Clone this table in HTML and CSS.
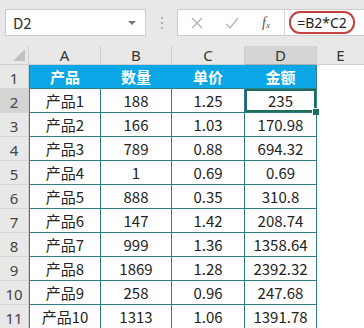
FILE: index.html
```html
<!DOCTYPE html>
<html>
<head>
<meta charset="utf-8">
<link rel="stylesheet" href="styles.css">
</head>
<body>
<div class="app">
  <div class="toolbar">
    <div class="namebox"><span class="ref">D2</span><span class="caret"></span></div>
    <div class="grip"><i></i><i></i><i></i></div>
    <div class="fbar">
      <div class="ficons">
        <svg class="ic" width="14" height="14" viewBox="0 0 14 14"><path d="M2 2L12 12M12 2L2 12" stroke="#b4b4b4" stroke-width="1.4" fill="none"/></svg>
        <svg class="ic" width="16" height="14" viewBox="0 0 16 14"><path d="M2 8L6 12L14 2" stroke="#b4b4b4" stroke-width="1.4" fill="none"/></svg>
        <span class="fx">f<sub>x</sub></span>
      </div>
      <div class="finput"><span class="oval">=B2*C2</span></div>
    </div>
  </div>
  <div class="sheet">
    <div class="corner"><span class="tri"></span></div>
    <div class="ch">A</div><div class="ch">B</div><div class="ch">C</div><div class="ch sel">D</div><div class="ch last">E</div>

    <div class="rh">1</div>
    <div class="c hd first">产品</div><div class="c hd">数量</div><div class="c hd">单价</div><div class="c hd hdlast">金额</div><div class="e"></div>

    <div class="rh sel">2</div>
    <div class="c first">产品1</div><div class="c">188</div><div class="c">1.25</div><div class="c active">235<span class="handle"></span></div><div class="e"></div>

    <div class="rh">3</div>
    <div class="c first">产品2</div><div class="c">166</div><div class="c">1.03</div><div class="c">170.98</div><div class="e"></div>

    <div class="rh">4</div>
    <div class="c first">产品3</div><div class="c">789</div><div class="c">0.88</div><div class="c">694.32</div><div class="e"></div>

    <div class="rh">5</div>
    <div class="c first">产品4</div><div class="c">1</div><div class="c">0.69</div><div class="c">0.69</div><div class="e"></div>

    <div class="rh">6</div>
    <div class="c first">产品5</div><div class="c">888</div><div class="c">0.35</div><div class="c">310.8</div><div class="e"></div>

    <div class="rh">7</div>
    <div class="c first">产品6</div><div class="c">147</div><div class="c">1.42</div><div class="c">208.74</div><div class="e"></div>

    <div class="rh">8</div>
    <div class="c first">产品7</div><div class="c">999</div><div class="c">1.36</div><div class="c">1358.64</div><div class="e"></div>

    <div class="rh">9</div>
    <div class="c first">产品8</div><div class="c">1869</div><div class="c">1.28</div><div class="c">2392.32</div><div class="e"></div>

    <div class="rh">10</div>
    <div class="c first">产品9</div><div class="c">258</div><div class="c">0.96</div><div class="c">247.68</div><div class="e"></div>

    <div class="rh">11</div>
    <div class="c first">产品10</div><div class="c">1313</div><div class="c">1.06</div><div class="c">1391.78</div><div class="e"></div>
  </div>
</div>
</body>
</html>
```

FILE: styles.css
```css
html, body {
  margin: 0;
  padding: 0;
}
body {
  width: 364px;
  height: 328px;
  overflow: hidden;
  background: #ffffff;
  font-family: "Noto Sans CJK SC", "Noto Sans", sans-serif;
  color: #222;
}
.app {
  width: 364px;
  height: 328px;
  overflow: hidden;
}
.toolbar {
  height: 46px;
  background: #e8e8e8;
  display: flex;
  align-items: flex-start;
  padding: 9px 0 0 5px;
  box-sizing: border-box;
}
.namebox {
  width: 141px;
  height: 27px;
  box-sizing: border-box;
  background: #fff;
  border: 1px solid #cdcdcd;
  display: flex;
  align-items: center;
  justify-content: space-between;
  padding: 0 7px 0 7px;
}
.ref {
  font-size: 15px;
  color: #333;
  line-height: 1;
}
.caret {
  width: 0;
  height: 0;
  border-left: 4px solid transparent;
  border-right: 4px solid transparent;
  border-top: 4px solid #777;
  margin-right: 2px;
}
.grip {
  width: 31px;
  height: 27px;
  display: flex;
  flex-direction: column;
  align-items: center;
  justify-content: center;
  gap: 3px;
}
.grip i {
  width: 2px;
  height: 2px;
  background: #b0b0b0;
}
.fbar {
  flex: 1;
  height: 27px;
  display: flex;
  background: #fff;
  border: 1px solid #cdcdcd;
  border-right: none;
  box-sizing: border-box;
}
.ficons {
  width: 107px;
  display: flex;
  align-items: center;
  padding-left: 12px;
  gap: 20px;
  box-sizing: border-box;
  border-right: 1px solid #d6d6d6;
}
.fx {
  font-family: "Liberation Serif", serif;
  font-style: italic;
  font-size: 14px;
  color: #555;
  margin-left: 2px;
}
.fx sub {
  font-size: 9px;
  vertical-align: -1px;
}
.finput {
  flex: 1;
  display: flex;
  align-items: center;
  padding-left: 4px;
}
.oval {
  display: inline-block;
  border: 2px solid #c6403d;
  border-radius: 11px;
  height: 23px;
  line-height: 20px;
  box-sizing: border-box;
  width: 66px;
  text-align: center;
  font-size: 14px;
  color: #222;
  font-family: "Noto Sans", sans-serif;
}
.sheet {
  display: grid;
  grid-template-columns: 29px 72px 71px 73px 72px 47px;
  grid-template-rows: 19px repeat(11, 24px);
  background: #fff;
}
.corner {
  background: #e8e8e8;
  border-right: 1px solid #cfcfcf;
  border-bottom: 1px solid #cfcfcf;
  box-sizing: border-box;
  position: relative;
}
.tri {
  position: absolute;
  right: 3px;
  bottom: 3px;
  width: 0;
  height: 0;
  border-left: 12px solid transparent;
  border-bottom: 12px solid #c2c2c2;
}
.ch {
  background: #e8e8e8;
  border-right: 1px solid #cfcfcf;
  border-bottom: 1px solid #cfcfcf;
  box-sizing: border-box;
  text-align: center;
  font-size: 15px;
  line-height: 19px;
  color: #333;
  font-family: "Noto Sans", sans-serif;
}
.ch.sel {
  background: #d4d4d4;
  border-bottom: 1px solid #adadad;
}
.ch.last {
  border-right: none;
}
.rh {
  background: #e8e8e8;
  border-bottom: 1px solid #d6d6d6;
  border-right: 1px solid #cfcfcf;
  box-sizing: border-box;
  text-align: center;
  font-size: 15px;
  line-height: 26px;
  color: #444;
  font-family: "Noto Sans", sans-serif;
}
.rh.sel {
  background: #d4d4d4;
}
.c {
  border-right: 1px solid #2f7f88;
  border-bottom: 1px solid #2f7f88;
  box-sizing: border-box;
  text-align: center;
  font-size: 15px;
  line-height: 23px;
  color: #222;
  position: relative;
}
.c.first {
  border-left: 1px solid #2f7f88;
}
.hd {
  background: #0aa6e5;
  color: #fff;
  font-weight: bold;
  border-right-color: #0aa6e5;
}
.hd.hdlast {
  border-right-color: #2f7f88;
}
.c.active {
  box-shadow: inset 0 0 0 2px #1e6e5e;
}
.handle {
  position: absolute;
  right: -4px;
  bottom: -4px;
  width: 6px;
  height: 6px;
  background: #1e6e5e;
  border: 1px solid #fff;
}
.e {
  background: #fff;
}
```
